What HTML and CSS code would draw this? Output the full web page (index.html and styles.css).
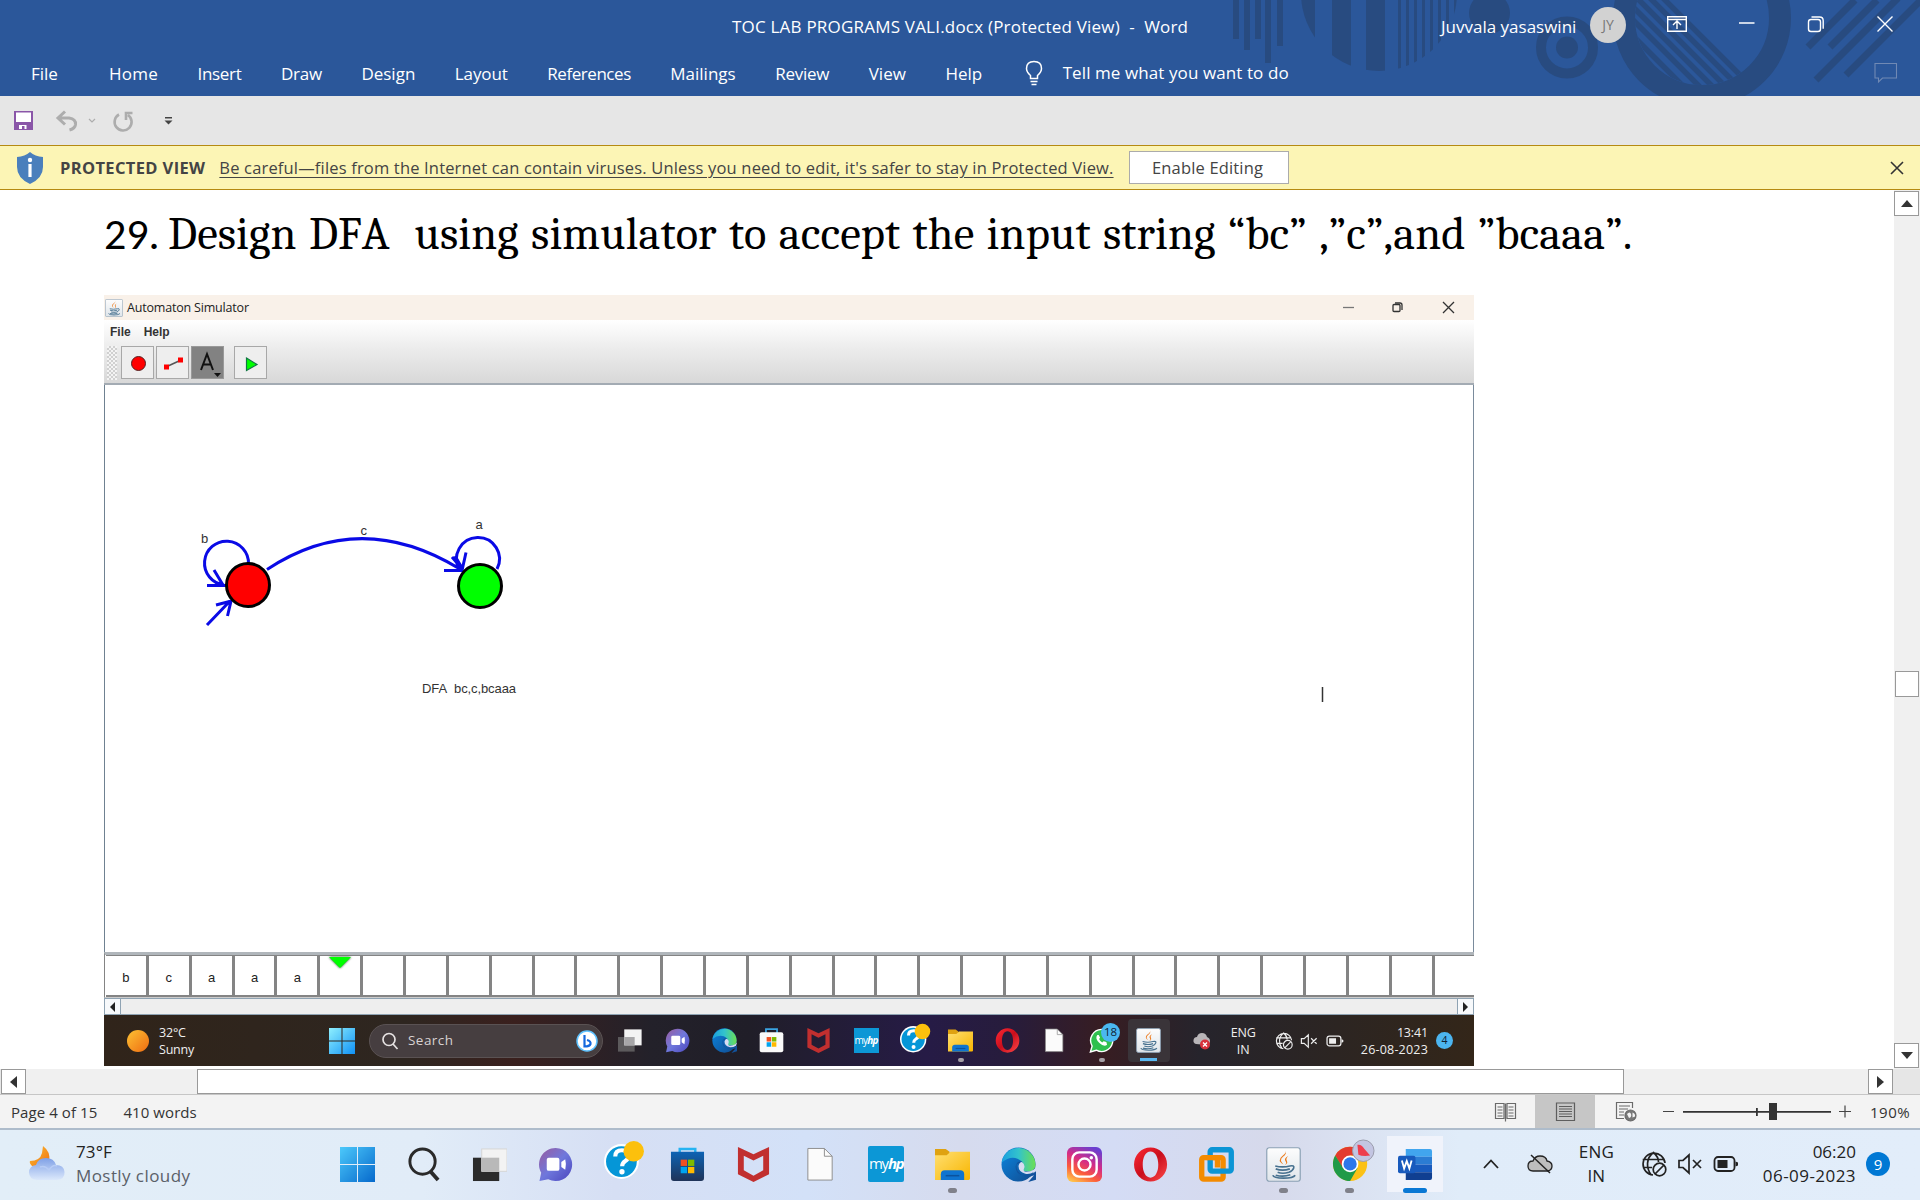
FILE: index.html
```html
<!DOCTYPE html>
<html lang="en">
<head>
<meta charset="utf-8">
<title>TOC LAB PROGRAMS VALI.docx - Word</title>
<link rel="stylesheet" href="styles.css">
</head>
<body>
<svg class="defs" width="0" height="0">
  <defs>
    <linearGradient id="gwin" x1="0" y1="0" x2="1" y2="1"><stop offset="0" stop-color="#4cc9fb"/><stop offset="1" stop-color="#0669cc"/></linearGradient>
    <linearGradient id="gwin2" x1="0" y1="0" x2="1" y2="1"><stop offset="0" stop-color="#8ff0fe"/><stop offset="1" stop-color="#1091f5"/></linearGradient>
    <linearGradient id="gchat" x1="0" y1="0" x2="1" y2="1"><stop offset="0" stop-color="#9a5b9e"/><stop offset=".5" stop-color="#6f78dc"/><stop offset="1" stop-color="#4b45bd"/></linearGradient>
    <linearGradient id="gfold" x1="0" y1="0" x2="1" y2="1"><stop offset="0" stop-color="#ffdf71"/><stop offset="1" stop-color="#f8b500"/></linearGradient>
    <linearGradient id="gedge" x1="0" y1="0" x2="1" y2="0"><stop offset="0" stop-color="#1a9fdf"/><stop offset=".5" stop-color="#33c3cc"/><stop offset="1" stop-color="#6ce052"/></linearGradient>
    <linearGradient id="gedge2" x1="0" y1="0" x2="1" y2="1"><stop offset="0" stop-color="#0b86e0"/><stop offset="1" stop-color="#114a8e"/></linearGradient>
    <linearGradient id="ginsta" x1=".2" y1="1" x2=".7" y2="0"><stop offset="0" stop-color="#ffc14a"/><stop offset=".3" stop-color="#fb5a3c"/><stop offset=".6" stop-color="#d52c86"/><stop offset="1" stop-color="#6a3fd0"/></linearGradient>
    <linearGradient id="gopera" x1="0" y1="0" x2="1" y2="1"><stop offset="0" stop-color="#ff2a35"/><stop offset=".5" stop-color="#c90e1c"/><stop offset="1" stop-color="#ff4a4a"/></linearGradient>
    <linearGradient id="gstore" x1="0" y1="0" x2="0" y2="1"><stop offset="0" stop-color="#0d63b4"/><stop offset="1" stop-color="#1f3358"/></linearGradient>
    <linearGradient id="gcloud" x1="0" y1="0" x2="0" y2="1"><stop offset="0" stop-color="#7fa0e6"/><stop offset="1" stop-color="#dbe8fb"/></linearGradient>
    <linearGradient id="gsun" x1="0" y1="0" x2="1" y2="1"><stop offset="0" stop-color="#fdc233"/><stop offset="1" stop-color="#ee6c12"/></linearGradient>
    <linearGradient id="gjava" x1="0" y1="0" x2="0" y2="1"><stop offset="0" stop-color="#fdfdfd"/><stop offset="1" stop-color="#dfe5ea"/></linearGradient>

    <symbol id="chat" viewBox="0 0 36 36"><path d="M18 1a17 17 0 1 1-7.500 32.200L1.500 35l1.800-8.500A17 17 0 0 1 18 1z" fill="url(#gchat)"/><rect x="9" y="11" width="13" height="13.500" rx="2" fill="#fff"/><path d="M24 15.500l4-3q1.500 5 0 11l-4-3z" fill="#fff"/></symbol>
    <symbol id="help" viewBox="0 0 40 40"><circle cx="17" cy="21" r="17" fill="#fff"/><circle cx="17" cy="21" r="15" fill="#0596d7"/><path d="M11 16q0-6 6.500-6t6.500 5.500q0 3-3.500 5.200-2.800 1.800-2.800 4.800" fill="none" stroke="#fff" stroke-width="4"/><circle cx="17.500" cy="31" r="2.600" fill="#fff"/><circle cx="29" cy="11" r="10" fill="#fcc00c"/></symbol>
    <symbol id="mcafee" viewBox="0 0 36 36"><path d="M2 0l16 7.500L34 0v28l-16 8-16-8zM8 9v15l10 5.500L28 24V9l-10 5z" fill="#c12f2f" fill-rule="evenodd"/></symbol>
    <symbol id="file" viewBox="0 0 36 36"><path d="M5 1.500h17l8 8V34H5z" fill="#fbfbfb" stroke="#8d8d8d" stroke-width="1"/><path d="M22 1.500v8h8" fill="none" stroke="#8d8d8d" stroke-width="1"/></symbol>
    <symbol id="folder" viewBox="0 0 36 36"><path d="M0 2h11l4 3v6H0z" fill="#dfa211"/><path d="M0 8.500h12l4-3.500h20v27.500q0 1.500-1.500 1.500H0z" fill="url(#gfold)"/><path d="M6 34v-6q0-4 4-4h16q4 0 4 4v6z" fill="#0f74cf"/><path d="M11 29.500h14" stroke="#0b529c" stroke-width="1.600"/></symbol>
    <symbol id="edge" viewBox="0 0 36 36"><circle cx="18" cy="18" r="17.500" fill="url(#gedge2)"/><path d="M.7 16A17.500 17.500 0 0 1 35.500 18q0 6.500-6.500 7h-5q-3-1-1-4 1-6-6-9-8-3-16.300 4z" fill="url(#gedge)"/><path d="M22 15q-6-1-7 5 0 8 8 9 7 1 13-4l2 8-10 3 6-7q-6 3-12 0-7-4-6-11z" fill="#12529c"/><path d="M21.500 15.500q-2.500 0-3.500 4 0 6 7 8 4 1 9.500-2l2-5-3 3q-3 2-8 2-3-.5-2-3 2-4-2-7z" fill="#d6dcf2"/></symbol>
    <symbol id="opera" viewBox="0 0 36 36"><path fill-rule="evenodd" d="M18 .5a17 17.500 0 1 0 .1 35A17 17.500 0 0 0 18 .5zM18 4.500c5 0 8 6 8 13.500s-3 13.500-8 13.500-8-6-8-13.500 3-13.500 8-13.500z" fill="url(#gopera)"/></symbol>
    <symbol id="java" viewBox="0 0 36 36"><rect x=".8" y=".8" width="34.400" height="34.400" rx="2.500" fill="url(#gjava)" stroke="#8aa0b4" stroke-width="1.200"/><path d="M20 3.500q2 3-2.500 6.500t.5 8q-7-4-1.500-8.500T20 3.500zM23 9q-5 3-3 5.500t-1 4.500q4-2 2.500-4.500T23 9z" fill="#ec7a1c"/><path d="M9.500 19.500q7.500 2 15 0M10 22.500q7 2.500 14.500 0M12 26q5 2 11.500 0M24.500 19.500q5-1 4 2t-5 4.500M7 29q1 3 11 3t12-3M10 29q8 2 15-.5" fill="none" stroke="#47718f" stroke-width="1.700"/></symbol>
    <symbol id="globe" viewBox="0 0 26 26"><g fill="none" stroke="currentColor" stroke-width="1.700"><path d="M12 24A11 11 0 1 1 24 12M1.700 8.500h21M1.700 16.500H11M10 23.500C5 17 5 7 12.500 1.500 16.500 5 17.500 8 17.500 11"/><circle cx="18.500" cy="18.500" r="6.300"/><path d="M14 23l9-9"/></g></symbol>
    <symbol id="mute" viewBox="0 0 26 22"><path d="M2 7.500h4l6-5.500v18l-6-5.500H2zM16 7l8 8M24 7l-8 8" fill="none" stroke="currentColor" stroke-width="1.700"/></symbol>
    <symbol id="battery" viewBox="0 0 26 20"><rect x="1.500" y="3" width="20" height="14" rx="3.500" fill="none" stroke="currentColor" stroke-width="1.800"/><path d="M4.500 6h10v8h-10zM22.500 7.500l2.500 1v3l-2.500 1z" fill="currentColor"/></symbol>
  </defs>
</svg>

<header class="ribbon">
  <svg class="decor" width="720" height="96" viewBox="1200 0 720 96">
    <clipPath id="c1"><circle cx="1379" cy="-7" r="78"/></clipPath>
    <clipPath id="c2"><circle cx="1702" cy="18" r="67"/></clipPath>
    <g fill="#284b80">
      <path d="M1233 0h6v39h-6zM1244 0h6v50h-6zM1255 0h6v39h-6zM1265 0h6v63h-6zM1277 0h6v46h-6z"/>
      <path clip-path="url(#c1)" d="M1300 0h15v96h-15zM1332 0h19v96h-19zM1366 0h19v96h-19zM1398 0h3v96h-3zM1406 0h3v96h-3zM1414 0h3v96h-3zM1422 0h3v96h-3zM1430 0h3v96h-3zM1438 0h3v96h-3zM1446 0h3v96h-3zM1454 0h3v96h-3z"/>
      <circle cx="1489.500" cy="13" r="20.500"/><circle cx="1567" cy="47.500" r="11"/>
    </g>
    <g fill="none" stroke="#284b80">
      <circle cx="1567" cy="47.500" r="26" stroke-width="10"/>
      <circle cx="1702" cy="18" r="78" stroke-width="22"/>
      <path clip-path="url(#c2)" stroke-width="5.500" d="M1617 20l80 80M1617 4l90 90M1617-9l100 100M1627-12l100 100M1637-15l100 100M1649-16l100 100"/>
      <path stroke-width="7" d="M1808 47l47-47M1830 47l47-47M1816 80l82-82M1846 75l78-78"/>
    </g>
  </svg>
  <div class="titlebar">
    <div class="doctitle">TOC LAB PROGRAMS VALI.docx (Protected View)&nbsp; -&nbsp; Word</div>
    <div class="user">Juvvala yasaswini</div>
    <div class="avatar">JY</div>
    <svg class="wbtn" width="284" height="48" viewBox="1636 0 284 48" fill="none" stroke="#fff" stroke-width="1.400"><path d="M1667.700 15.700h18.600v14.600h-18.600zM1667.700 18.500h18.600M1677 28v-7.500M1673 24l4-4 4 4M1739 22h15.500"/><rect x="1808.500" y="18.500" width="12" height="12" rx="2.500"/><path d="M1811.500 16h8q3.700 0 3.700 3.700v8M1877.500 15.500l15 15M1892.500 15.500l-15 15"/></svg>
  </div>
  <nav class="tabs">
    <span class="tab t-file">File</span><span class="tab t-home">Home</span><span class="tab t-insert">Insert</span><span class="tab t-draw">Draw</span><span class="tab">Design</span><span class="tab t-layout">Layout</span><span class="tab t-refs">References</span><span class="tab">Mailings</span><span class="tab t-review">Review</span><span class="tab">View</span><span class="tab">Help</span>
    <svg class="bulb" width="18" height="26" viewBox="0 0 18 26" fill="none" stroke="#fff" stroke-width="1.500"><path d="M5.500 18.500v-3Q1.500 12 1.500 8.500 1.500 1.500 9 1.500t7.500 7q0 3.500-4 7v3zM5.500 21.500h7M6.500 24.500h5"/></svg>
    <span class="tell">Tell me what you want to do</span>
    <svg class="comment" width="24" height="22" viewBox="0 0 24 22" fill="none" stroke="#7089b4" stroke-width="1.100"><path d="M1 1.500h21.500V16H8.500l-4 4V16H1z"/></svg>
  </nav>
</header>

<div class="qat">
  <svg width="180" height="49" viewBox="0 96 180 49"><path d="M14 111h19v19H14z" fill="#8a56a8"/><path d="M16 112.500h15V122H16zM19 125h7.500v4h-2v-3h-2.500v3H19z" fill="#fff"/><g fill="none" stroke="#adadad" stroke-width="3"><path d="M59 118h10q7 1 6.500 6.500-.5 4-6 5.500M65 111.500l-7 6.500 7 6.500"/><path d="M119 114.500a8.500 8.500 0 1 0 9 .5M132.500 113h-6.500v7" stroke-width="2.600"/><path d="M89 119l3 3 3-3" stroke-width="1.200"/></g><path d="M165 117h7v1.500h-7zM164.500 120.500h8l-4 4z" fill="#444"/></svg>
</div>

<div class="protected">
  <svg class="shield" width="30" height="34" viewBox="0 0 30 34"><path d="M15 1q5 4.500 13 5v10q0 11-13 17Q2 27 2 16V6q8-.5 13-5z" fill="#4a7fbc"/><circle cx="15" cy="9" r="2.200" fill="#fff"/><path d="M13.400 13h3.200v13h-3.200z" fill="#fff"/></svg>
  <b class="pv">PROTECTED VIEW</b>
  <span class="warn">Be careful—files from the Internet can contain viruses. Unless you need to edit, it's safer to stay in Protected View.</span>
  <span class="enable">Enable Editing</span>
  <svg class="close" width="14" height="14" viewBox="0 0 14 14"><path d="M1 1l12 12M13 1L1 13" stroke="#333" stroke-width="1.600"/></svg>
</div>

<main class="doc">
  <section class="page">
    <h1><span class="num">29.</span><span class="q">Design DFA  using simulator to accept the input string “bc” ,”c”,and ”bcaaa”.</span></h1>
    <div class="shot">
      <div class="s-title">
        <svg width="18" height="18"><use href="#java" width="18" height="18"/></svg>
        <span class="s-name">Automaton Simulator</span>
        <svg class="s-wbtn" width="116" height="16" viewBox="0 0 116 16" fill="none" stroke="#333" stroke-width="1.300"><path d="M0 7.500h11" stroke="#777"/><rect x="50" y="4.500" width="7" height="7" rx="1"/><path d="M52 3h5q2 0 2 2v5M100 2l11 11M111 2l-11 11"/></svg>
      </div>
      <div class="s-head">
        <div class="s-menu"><b>File</b><b>Help</b></div>
        <div class="s-tools">
          <i class="grip"></i>
          <span class="tool"><svg width="32" height="32"><circle cx="16.500" cy="16.500" r="7" fill="#f00" stroke="#522" stroke-width="1"/></svg></span>
          <span class="tool"><svg width="32" height="32"><path d="M10 19.500l13-6" stroke="#555" stroke-width="1.500"/><path d="M7 17.500h5v5H7zM21 10.500h5v5h-5z" fill="#f00"/></svg></span>
          <span class="tool on"><svg width="32" height="32"><path d="M9 23l6-16 6 16M11 17.500h8" fill="none" stroke="#111" stroke-width="2"/><path d="M22 26h7l-3.500 4z" fill="#111"/></svg></span>
          <span class="tool play"><svg width="32" height="32"><path d="M11.500 11l10.500 6.500L11.500 23.500z" fill="#0f0" stroke="#174" stroke-width="1.200"/></svg></span>
        </div>
      </div>
      <div class="s-canvas">
        <svg width="1368" height="567" viewBox="105 385 1368 567">
          <g fill="none" stroke="#0a0ae6" stroke-width="3">
            <path d="M248.500 564A22 22 0 1 0 224 585M207 585.500h19M214 570l9 15M207 625l23-24M216 605l15-4-3.500 15"/>
            <path d="M267 569.500Q360 508 460 569"/>
            <path d="M459.500 570A21.500 21.500 0 1 1 497 569M444 570.500h18l4-18M452 557l11 13M455 556l7 12"/>
          </g>
          <circle cx="248" cy="585" r="21.500" fill="#f00" stroke="#000" stroke-width="3"/>
          <circle cx="480" cy="586" r="21.500" fill="#0f0" stroke="#000" stroke-width="3"/>
          <g class="s-lab"><text x="201" y="543">b</text><text x="360.500" y="534.500">c</text><text x="475.500" y="529">a</text><text x="422" y="693" textLength="94">DFA&#160; bc,c,bcaaa</text></g>
          <path d="M1322.500 687v15" stroke="#333" stroke-width="1.500"/>
        </svg>
      </div>
      <div class="s-tape"><i>b</i><i>c</i><i>a</i><i>a</i><i>a</i><i class="head"></i><i></i><i></i><i></i><i></i><i></i><i></i><i></i><i></i><i></i><i></i><i></i><i></i><i></i><i></i><i></i><i></i><i></i><i></i><i></i><i></i><i></i><i></i><i></i><i></i><i></i><i></i></div>
      <div class="s-scroll"><i class="l"></i><i class="r"></i></div>
      <div class="s-task">
        <svg class="sun" width="24" height="24"><circle cx="12" cy="12" r="11" fill="url(#gsun)"/></svg>
        <div class="s-weather">32°C<br>Sunny</div>
        <svg class="s-win" width="26" height="26" fill="url(#gwin2)"><path d="M0 0h12.500v12.500H0zM13.500 0H26v12.500H13.500zM0 13.500h12.500V26H0zM13.500 13.500H26V26H13.500z"/></svg>
        <div class="s-search"><svg width="18" height="18" viewBox="0 0 18 18" fill="none" stroke="#e6e2e2" stroke-width="1.700"><circle cx="8" cy="7.500" r="6"/><path d="M12 12l4.500 5"/></svg><span class="ph">Search</span><svg class="bing" width="22" height="22" viewBox="0 0 22 22"><circle cx="11" cy="11" r="10" fill="#fff" stroke="#5ec2ff" stroke-width="1.500"/><path d="M8.500 5v11.500q5 0 6-2.500.5-3-3.500-4" fill="none" stroke="#1468dd" stroke-width="2.200"/></svg></div>
        <div class="s-apps">
          <svg viewBox="0 0 36 36"><rect x="0" y="13" width="24" height="21" fill="#5c5a5c"/><rect x="9" y="2" width="25" height="23" fill="#f3f3f3"/><path d="M9 13h15v12H9z" fill="#a7a6a8"/></svg>
          <svg><use href="#chat"/></svg>
          <svg><use href="#edge"/></svg>
          <svg viewBox="0 0 36 36"><path d="M10 8V1.500h16V8" fill="none" stroke="#3aa4e2" stroke-width="2.500"/><rect x="1" y="6" width="34" height="29" rx="3" fill="#fafafa"/><path d="M11 13h6.500v6.500H11z" fill="#f25022"/><path d="M18.500 13H25v6.500h-6.500z" fill="#7fba00"/><path d="M11 20.500h6.500V27H11z" fill="#00a4ef"/><path d="M18.500 20.500H25V27h-6.500z" fill="#ffb900"/></svg>
          <svg><use href="#mcafee"/></svg>
          <span class="hp">my<b>hp</b></span>
          <svg class="big"><use href="#help"/></svg>
          <span class="srun"><svg><use href="#folder"/></svg></span>
          <svg><use href="#opera"/></svg>
          <svg><use href="#file"/></svg>
          <span class="wa srun"><svg viewBox="0 0 36 36"><path d="M18 2a16 16 0 1 1-7.500 30L2 34.500 4.500 26A16 16 0 0 1 18 2z" fill="#2fc04f" stroke="#fff" stroke-width="2"/><path d="M12 10q-4 5 3 11.500T26 24l-1-4-4-1-2 2q-3-2-4.500-5l1.500-2-2-4z" fill="#fff"/></svg><em>18</em></span>
          <span class="jv"><svg><use href="#java"/></svg></span>
        </div>
        <svg class="s-cloud" width="20" height="20"><path d="M4 13q-3-1-2.500-4T5 6q1-4 5-4t5 4q3 1 3 4t-3 4z" fill="#b8b5b8"/><circle cx="13" cy="13.500" r="5" fill="#d8313c"/><path d="M11 11.500l4 4M15 11.500l-4 4" stroke="#fff" stroke-width="1.300"/></svg>
        <div class="s-lang">ENG<br>IN</div>
        <svg class="s-globe" width="18" height="18"><use href="#globe"/></svg>
        <svg class="s-mute" width="18" height="16"><use href="#mute"/></svg>
        <svg class="s-batt" width="18" height="14"><use href="#battery"/></svg>
        <div class="s-clock">13:41<br><span class="s-date">26-08-2023</span></div>
        <div class="s-badge">4</div>
      </div>
    </div>
  </section>
  <div class="vscroll"><i class="btn up"></i><i class="thumb"></i><i class="btn down"></i></div>
</main>
<div class="hscroll"><i class="btn left"></i><i class="track"><i class="hthumb"></i></i><i class="btn right"></i></div>

<footer class="status">
  <span>Page 4 of 15</span><span class="words">410 words</span>
  <div class="views">
    <svg width="60" height="33" viewBox="0 0 60 33" fill="none" stroke="#6a6a6a" stroke-width="1.200"><path d="M30.500 8.500v18M29 8.500h-8.500v15H29zM32 8.500h8.500v15H32zM22.500 12h5M22.500 15h5M22.500 18h5M22.500 21h5M33.500 12h5M33.500 15h5M33.500 18h5M33.500 21h5"/></svg>
    <svg class="cur" width="60" height="33" viewBox="0 0 60 33" fill="none" stroke="#5e5e5e" stroke-width="1.200"><path d="M21.500 8h18v17.500h-18zM24 11.500h13M24 14h13M24 16.500h13M24 19h13M24 21.500h13"/></svg>
    <svg width="60" height="33" viewBox="0 0 60 33" fill="none" stroke="#6a6a6a" stroke-width="1.200"><path d="M37.500 13V7.500h-16v16H29M24 11h11M24 14h9M24 17h5M24 20h5"/><circle cx="35.500" cy="20.500" r="5.500" fill="#777"/><path d="M32 19q3-3 4 0t-2 4zM37.500 17.500q3 1 2.500 4l-2.500 1z" fill="#f3f3f3" stroke="none"/></svg>
  </div>
  <svg class="zoom" width="200" height="33" viewBox="1655 1095 200 33"><path d="M1663 1111.500h11M1839 1111.500h12M1845 1105.500v12" stroke="#444" stroke-width="1.200"/><path d="M1683 1111h148v1.800h-148zM1756 1108h1.800v8h-1.800zM1769 1103h8v17h-8z" fill="#333"/></svg>
  <span class="pct">190%</span>
</footer>

<div class="taskbar">
  <svg class="moon" width="38" height="38" viewBox="0 0 38 38"><path d="M15 1q8 6 6 15-6 10-17 5Q1 18 2 16q10 0 12-8z" fill="url(#gsun)"/><path d="M9 35q-8-1-8-7.500T8 20q2-7 10-7t10 7q8 0 8.500 7T29 35z" fill="url(#gcloud)"/><path d="M12 22q5-2 9 3 4-6 8-4" fill="none" stroke="#b7ccf5" stroke-width="1.500"/></svg>
  <div class="weather">73°F<br><span class="cond">Mostly cloudy</span></div>
  <div class="apps">
    <span class="app"><svg fill="url(#gwin)"><path d="M0 0h17v17H0zM18 0h17v17H18zM0 18h17v17H0zM18 18h17v17H18z"/></svg></span>
    <span class="app"><svg viewBox="0 0 36 36" fill="none" stroke="#2a2a2a"><circle cx="17" cy="15" r="13" stroke-width="3"/><path d="M25 25l8 9" stroke-width="4"/></svg></span>
    <span class="app"><svg viewBox="0 0 36 36"><rect x="1" y="11" width="27" height="24" fill="#2b2b2b"/><rect x="10" y="2" width="26" height="23" fill="#f3f3f3" stroke="#d5d5d5" stroke-width="1"/><path d="M10 11h18v14H10z" fill="#b9b9b9"/></svg></span>
    <span class="app"><svg><use href="#chat"/></svg></span>
    <span class="app"><svg class="big"><use href="#help"/></svg></span>
    <span class="app"><svg viewBox="0 0 36 36"><path d="M10 8V2h16v6" fill="none" stroke="#25b3f2" stroke-width="2.500"/><path d="M1 5h34v27q0 3-3 3H4q-3 0-3-3z" fill="url(#gstore)"/><path d="M11 13h6.500v6.500H11z" fill="#f25022"/><path d="M18.500 13H25v6.500h-6.500z" fill="#7fba00"/><path d="M11 20.500h6.500V27H11z" fill="#00a4ef"/><path d="M18.500 20.500H25V27h-6.500z" fill="#ffb900"/></svg></span>
    <span class="app"><svg><use href="#mcafee"/></svg></span>
    <span class="app"><svg><use href="#file"/></svg></span>
    <span class="app"><span class="hp">my<b>hp</b></span></span>
    <span class="app run"><svg><use href="#folder"/></svg></span>
    <span class="app"><svg><use href="#edge"/></svg></span>
    <span class="app"><svg viewBox="0 0 36 36"><rect width="36" height="36" rx="6" fill="url(#ginsta)"/><rect x="5.500" y="5.500" width="25" height="25" rx="7" fill="none" stroke="#fff" stroke-width="2.500"/><circle cx="18" cy="18" r="6.200" fill="none" stroke="#fff" stroke-width="2.500"/><circle cx="25" cy="11" r="1.800" fill="#fff"/></svg></span>
    <span class="app"><svg><use href="#opera"/></svg></span>
    <span class="app"><svg viewBox="0 0 36 36" fill="none" stroke-width="5.500"><rect x="2.800" y="11" width="22" height="22" rx="2" stroke="#f38b00"/><rect x="11.500" y="2.800" width="21.700" height="22" rx="2" stroke="#0c95d5"/><path d="M8 11h11v10" stroke="#f38b00"/></svg></span>
    <span class="app run"><svg><use href="#java"/></svg></span>
    <span class="app run"><svg class="chrome" viewBox="0 0 44 44"><g transform="translate(1 8)"><circle cx="17.500" cy="17.500" r="17.500" fill="#fbc116"/><path d="M2.300 8.800A17.500 17.500 0 0 1 32.700 8.800H17.500L10 22z" fill="#e33b2e"/><path d="M2.300 8.800A17.500 17.500 0 0 0 17.500 35l7.500-13-7.500-4-7 4z" fill="#1f9a48"/><circle cx="17.500" cy="17.500" r="8.500" fill="#fff"/><circle cx="17.500" cy="17.500" r="6.800" fill="#2c77ea"/></g><circle cx="32" cy="12" r="11" fill="#c3c5e2" stroke="#9a9cab"/><path d="M26 6q4-1 7 4l6 7q-8 1-12-1z" fill="#ee3d4e"/></svg></span>
    <span class="app active"><svg viewBox="0 0 36 36"><path d="M8 2h25q2 0 2 2v6H8z" fill="#41a5ee"/><path d="M8 10h27v8H8z" fill="#2b7cd3"/><path d="M8 18h27v8H8z" fill="#185abd"/><path d="M8 26h27v6q0 2-2 2H8z" fill="#103f91"/><rect x="0" y="9" width="18" height="18" rx="2" fill="#185abd"/><path d="M4 14l2.300 8L9 14.500l2.700 7.500 2.300-8" fill="none" stroke="#fff" stroke-width="1.900"/></svg></span>
  </div>
  <div class="tray">
    <svg class="chev" width="16" height="10"><path d="M1 9l7-7.500L15 9" fill="none" stroke="#222" stroke-width="1.800"/></svg>
    <svg class="cloud" width="26" height="20" viewBox="0 0 26 20"><path d="M6 17q-5 0-5-5t5-5q2-5 7-5 6 0 7 5 5 1 5 5t-4 5z" fill="#bdbdbd" stroke="#222" stroke-width="1.300"/><path d="M4 1l19 18" stroke="#222" stroke-width="1.500"/></svg>
    <div class="lang">ENG<br>IN</div>
    <svg width="26" height="26"><use href="#globe"/></svg>
    <svg class="mute" width="26" height="22"><use href="#mute"/></svg>
    <svg class="batt" width="26" height="20"><use href="#battery"/></svg>
    <div class="clock">06:20<br><span class="date">06-09-2023</span></div>
    <div class="badge">9</div>
  </div>
</div>
</body>
</html>
```
FILE: styles.css
```css
* { box-sizing: border-box; }
body { margin: 0; width: 1920px; height: 1200px; overflow: hidden; display: flex; flex-direction: column; background: #fff; font-family: "Open Sans", "Noto Sans", sans-serif; color: #222; }
svg { display: block; flex: none; }
i, em { font-style: normal; }
.defs { position: absolute; }

.ribbon { position: relative; height: 96px; background: #2b579a; color: #fff; flex: none; font-size: 17px; }
.decor { position: absolute; right: 0; top: 0; }
.titlebar { position: relative; height: 50px; display: flex; align-items: center; padding-left: 732px; white-space: nowrap; }
.doctitle { width: 709px; padding-top: 3px; letter-spacing: .206px; }
.user { width: 149px; padding-top: 3px; }
.avatar { width: 36px; height: 36px; border-radius: 50%; background: #d2d2d2; color: #777; font-size: 14px; line-height: 36px; text-align: center; margin-right: 10px; }
.tabs { position: relative; height: 46px; display: flex; align-items: center; padding-left: 31px; white-space: nowrap; }
.tab { margin-right: 39.500px; padding-top: 1px; }
.t-file { margin-right: 51px; }
.t-home { letter-spacing: .25px; }
.t-insert { letter-spacing: -.3px; }
.t-draw { letter-spacing: -.25px; }
.t-layout { letter-spacing: -.1px; }
.t-refs { letter-spacing: -.45px; }
.t-review { letter-spacing: -.25px; }
.bulb { margin: 0 20px 0 3px; }
.tell { padding-bottom: 1px; letter-spacing: .093px; }
.comment { margin-left: auto; margin-right: 22px; }

.qat { height: 49px; flex: none; background: #e6e6e6; }
.protected { height: 45px; flex: none; display: flex; align-items: center; background: #fcf5b5; border-top: 1px solid #b58a12; border-bottom: 1px solid #b58a12; font-size: 16.500px; color: #444; padding-left: 15px; white-space: nowrap; }
.shield { margin-right: 15px; }
.pv { margin-right: 14px; letter-spacing: .356px; }
.warn { text-decoration: underline; text-underline-offset: 3px; margin-right: 15px; letter-spacing: .171px; }
.enable { width: 160px; height: 33px; background: #fff; border: 1px solid #ababab; text-align: center; line-height: 31px; letter-spacing: .167px; padding-right: 2px; }
.close { margin-left: auto; margin-right: 16px; }

.doc { height: 879px; flex: none; display: flex; }
.page { flex: 1; padding-left: 104px; overflow: hidden; }
h1 { margin: 0; height: 105px; display: flex; align-items: baseline; font-weight: 400; color: #000; white-space: pre; line-height: 88px; }
.num { font-family: Calibri, Carlito, "Open Sans", sans-serif; font-size: 44px; width: 64px; }
.q { font-family: Cambria, Caladea, "Liberation Serif", serif; font-size: 46.500px; font-kerning: none; letter-spacing: .1px; word-spacing: 2px; }

.shot { width: 1370px; height: 771px; display: flex; flex-direction: column; color: #222; }
.s-title { height: 25px; display: flex; align-items: center; background: #f9f1e9; padding-left: 1px; font-size: 12.500px; gap: 4px; }
.s-name { letter-spacing: -.188px; }
.s-wbtn { margin-left: auto; margin-right: 15px; }
.s-head { height: 65px; background: linear-gradient(#fff, #ececec 45%, #d8d8d8); border-bottom: 2px solid #a3abb3; }
.s-menu { height: 23px; display: flex; gap: 13px; padding: 4px 0 0 6px; font: bold 12px/16px "Liberation Sans", sans-serif; color: #333; }
.s-tools { display: flex; padding-left: 3px; gap: 2px; padding-top: 3px; }
.grip { width: 10px; height: 34px; margin-right: 2px; background: repeating-conic-gradient(#d0d0d0 0 25%, #f4f4f4 0 50%) 0 0 / 4px 4px; }
.tool { width: 33px; height: 33px; border: 1px solid #a8a8a8; background: #eee; }
.tool.on { background: #828282; border-color: #999; }
.play { margin-left: 8px; }
.s-canvas { height: 567px; border-left: 1px solid #6f8191; border-right: 1px solid #7a8b9c; background: #fff; overflow: hidden; }
.s-lab { font: 13px "Liberation Sans", sans-serif; fill: #333; }
.s-tape { height: 46px; border-top: 3px solid #b0b6bb; border-bottom: 1px solid #ccc; display: flex; overflow: hidden; padding-left: 1px; border-left: 1px solid #848484; }
.s-tape i { flex: none; width: 42.860px; height: 42px; border: solid #848484; border-width: 1px 3px 2px 0; font: 13px/43px "Liberation Sans", sans-serif; text-align: center; }
.s-tape i:last-child { border-right: 0; }
.s-tape .head::before { content: ""; display: block; width: 0; margin: 1px auto; border: 11px solid transparent; border-top-color: #0f0; border-bottom: 0; filter: drop-shadow(0 0 1px #030); }
.s-scroll { height: 17px; background: #eee; border: 1px solid #8fa3b3; display: flex; justify-content: space-between; }
.s-scroll i { width: 16px; display: flex; align-items: center; justify-content: center; background: #f7f9fb; }
.s-scroll .l { border-right: 1px solid #8fa3b3; }
.s-scroll .r { border-left: 1px solid #8fa3b3; }
.s-scroll .l::before { content: ""; border: 5px solid transparent; border-right: 5px solid #222; border-left: 0; }
.s-scroll .r::before { content: ""; border: 5px solid transparent; border-left: 5px solid #222; border-right: 0; }

.s-task { height: 51px; display: flex; align-items: center; color: #eee; font-size: 12.500px; line-height: 17px; white-space: nowrap; background: linear-gradient(90deg, #30241a, #2e2620 22%, #3a201e 30%, #23212a 40%, #201e28 47%, #261b46 60%, #271c3c 66%, #371d22 73%, #26242c 80%, #2c2522 90%, #332619); }
.sun { margin: 0 9px 0 22px; }
.s-weather { width: 170px; color: #f0f0f0; letter-spacing: -.2px; }
.s-win { margin-right: 14px; }
.s-search { width: 234px; height: 34px; border-radius: 17px; border: 1px solid #5a5253; background: #463e40; display: flex; align-items: center; padding: 0 4px 0 11px; font-size: 13.500px; color: #d8d2d2; margin-right: 4px; }
.ph { margin-left: 9px; letter-spacing: .45px; }
.bing { margin-left: auto; }
.s-apps { display: grid; grid-template-columns: repeat(12, 47.100px); justify-items: center; align-items: center; height: 51px; }
.s-apps svg { width: 25px; height: 25px; }
.s-apps svg.big { width: 31px; height: 31px; position: relative; left: 2px; top: -2px; }
.hp { display: block; font: 10px/25px "Open Sans", sans-serif; width: 25px; height: 25px; text-align: center; background: #0c97d6; color: #fff; letter-spacing: -.8px; }
.hp b { font-style: italic; }
.srun { position: relative; }
.srun::after { content: ""; position: absolute; left: 10px; bottom: -9px; width: 6px; height: 4px; border-radius: 2px; background: #a5a0a6; }
.wa em { position: absolute; left: 12px; top: -5px; width: 19px; height: 19px; border-radius: 10px; background: #4ab8f0; color: #123; font-size: 11.500px; line-height: 18px; text-align: center; }
.jv { width: 42px; height: 43px; border-radius: 4px; background: linear-gradient(#5ab8f2, #5ab8f2) center 39px / 17px 3px no-repeat, #3a3439; display: flex; align-items: center; justify-content: center; }
.s-cloud { margin-left: 20px; }
.s-lang { width: 50px; text-align: center; margin-left: 6px; margin-right: 7px; letter-spacing: -.2px; }
.s-globe { margin-right: 7px; }
.s-mute { margin-right: 8px; }
.s-clock { text-align: right; margin-left: auto; margin-right: 8px; letter-spacing: -.15px; }
.s-date { letter-spacing: .196px; }
.s-badge { width: 17px; height: 17px; border-radius: 9px; background: #4cb5f0; color: #123; font-size: 10.500px; text-align: center; margin-right: 21px; }

.vscroll { width: 26px; background: #f0f0f0; display: flex; flex-direction: column; align-items: center; justify-content: space-between; padding: 1px 1px 1px 0; }
.btn { width: 25px; height: 25px; background: #fff; border: 1px solid #999; display: flex; align-items: center; justify-content: center; flex: none; }
.thumb { width: 24px; height: 26px; background: #fff; border: 1px solid #999; margin-top: 109px; }
.btn::before { content: ""; border: 6px solid transparent; }
.up::before { border-bottom: 7px solid #333; border-top: 0; }
.down::before { border-top: 7px solid #333; border-bottom: 0; }
.left::before { border-right: 7px solid #333; border-left: 0; }
.right::before { border-left: 7px solid #333; border-right: 0; }
.hscroll { height: 26px; flex: none; display: flex; background: #e6e6e6; padding-left: 1px; border-bottom: 1px solid #c6c6c6; }
.track { width: 1842px; background: #f0f0f0; display: flex; padding-left: 171px; height: 25px; }
.hthumb { width: 1427px; height: 25px; background: #fff; border: 1px solid #999; }

.status { height: 33px; flex: none; display: flex; align-items: center; background: #f3f3f3; font-size: 15px; padding-left: 11px; white-space: nowrap; color: #333; letter-spacing: .08px; }
.words { margin-left: 26px; }
.views { display: flex; margin-left: auto; }
.cur { background: #c6c6c6; }
.pct { width: 50px; margin-left: 15px; letter-spacing: .5px; }

.taskbar { height: 72px; flex: none; display: flex; align-items: center; padding-bottom: 2px; border-top: 2px solid #aebccb; background: linear-gradient(90deg, #e2eef8, #e1ecf8 22%, #d6dff4 32%, #d3e1f8 42%, #d6dbee 50%, #d4dcf5 58%, #d6d9eb 66%, #e0ecf9 76%, #e2edfa); font-size: 17px; line-height: 24px; white-space: nowrap; }
.moon { margin: 0 10px 0 28px; }
.weather { width: 248px; letter-spacing: .1px; }
.cond { color: #5a6068; letter-spacing: .424px; }
.apps { display: grid; grid-template-columns: repeat(17, 66.150px); height: 68px; }
.app { position: relative; display: flex; align-items: center; justify-content: center; }
.app svg { width: 35px; height: 35px; }
.app svg.big { width: 41px; height: 41px; position: relative; left: 3px; top: -4px; }
.app svg.chrome { width: 43px; height: 43px; position: relative; left: 4px; top: -4px; }
.app .hp { width: 36px; height: 36px; font-size: 15px; line-height: 35px; border-radius: 2px; letter-spacing: -1.200px; }
.run::after, .active::after { content: ""; position: absolute; bottom: 5px; width: 9px; height: 5px; border-radius: 3px; background: #80818a; }
.active::after { width: 24px; background: #0a78d4; }
.active { background: linear-gradient(#f0f3fb, #f0f3fb) center / 56px 56px no-repeat; }
.tray { flex: 1; display: flex; align-items: center; }
.chev { margin-left: 35px; }
.cloud { margin-left: 28px; }
.lang { width: 60px; text-align: center; margin: 0 15px 0 13px; letter-spacing: .2px; }
.mute { margin-left: 10px; }
.batt { margin-left: 10px; }
.clock { text-align: right; margin-left: auto; }
.date { letter-spacing: .45px; }
.badge { width: 24px; height: 24px; border-radius: 12px; background: #0078d4; color: #fff; font-size: 15px; text-align: center; margin: 0 30px 0 10px; }
```
